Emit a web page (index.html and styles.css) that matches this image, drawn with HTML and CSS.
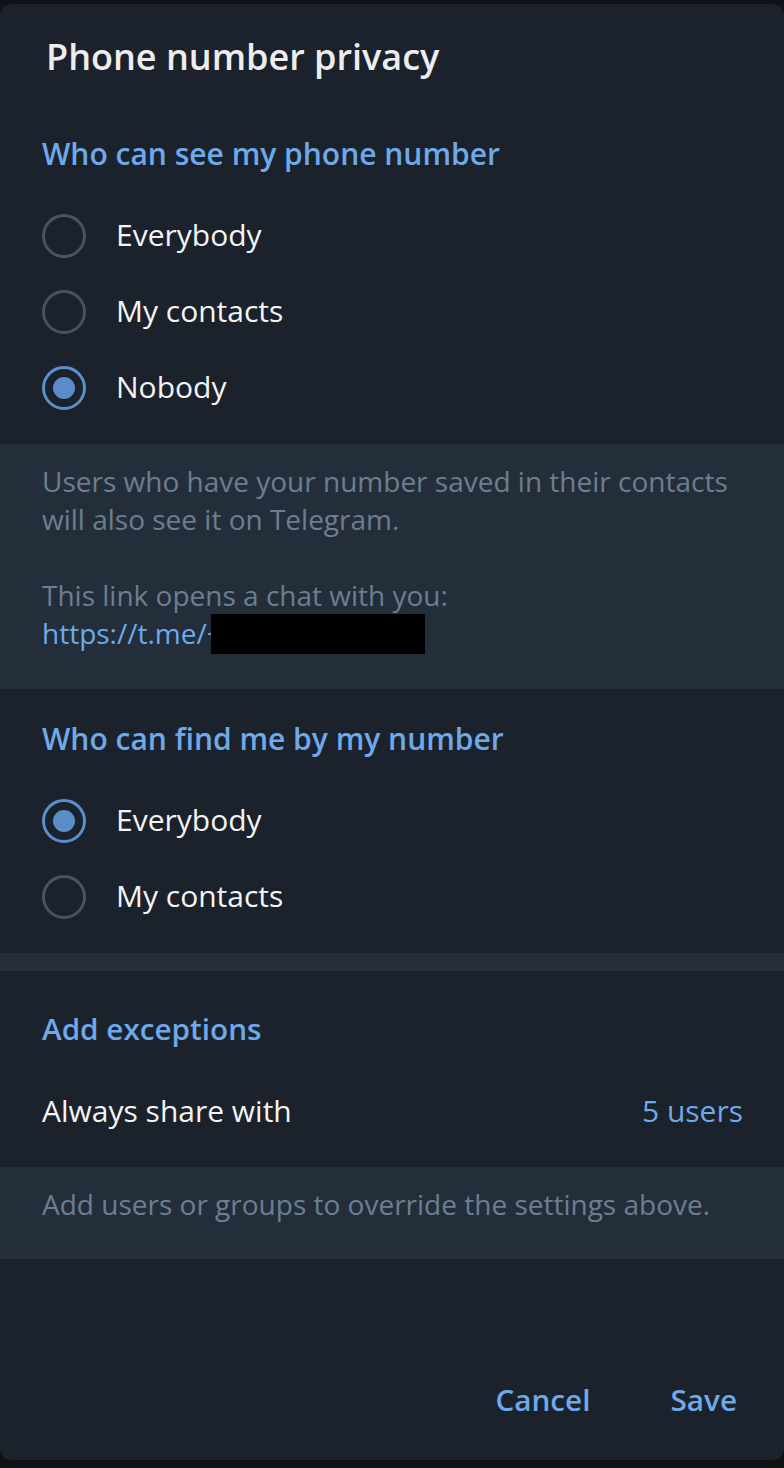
FILE: index.html
```html
<!DOCTYPE html>
<html lang="en">
<head>
<meta charset="utf-8">
<title>Phone number privacy</title>
<link rel="stylesheet" href="styles.css">
</head>
<body>
<div class="dialog">
  <h1 class="title">Phone number privacy</h1>

  <section class="section section-first">
    <h2 class="section-title">Who can see my phone number</h2>
    <div class="options">
      <div class="option"><span class="radio"></span><span class="label">Everybody</span></div>
      <div class="option"><span class="radio"></span><span class="label">My contacts</span></div>
      <div class="option"><span class="radio checked"></span><span class="label">Nobody</span></div>
    </div>
  </section>

  <div class="hint">
    <p class="hint-text">Users who have your number saved in their contacts will also see it on Telegram.</p>
    <p class="hint-text hint-gap">This link opens a chat with you:<br><span class="link">https://t.me/+</span><span class="redact"></span></p>
  </div>

  <section class="section">
    <h2 class="section-title">Who can find me by my number</h2>
    <div class="options">
      <div class="option"><span class="radio checked"></span><span class="label">Everybody</span></div>
      <div class="option"><span class="radio"></span><span class="label">My contacts</span></div>
    </div>
  </section>

  <div class="divider"></div>

  <section class="section section-exceptions">
    <h2 class="section-title exceptions-title">Add exceptions</h2>
    <div class="share-row">
      <span class="share-label">Always share with</span>
      <span class="share-value">5 users</span>
    </div>
  </section>

  <div class="hint">
    <p class="hint-text">Add users or groups to override the settings above.</p>
  </div>

  <div class="footer">
    <span class="button">Cancel</span>
    <span class="button">Save</span>
  </div>
</div>
</body>
</html>
```
FILE: styles.css
```css
html, body {
  margin: 0;
  padding: 0;
  background: #0e1115;
}

body {
  font-family: "Open Sans", "Noto Sans", sans-serif;
  width: 784px;
  height: 1468px;
  overflow: hidden;
}

.dialog {
  margin-top: 4px;
  height: 1456px;
  box-sizing: border-box;
  padding-top: 29px;
  background: #1b222b;
  border-radius: 12px;
  display: flex;
  flex-direction: column;
  overflow: hidden;
}

.title {
  margin: 0 0 23px;
  padding-left: 46px;
  font-size: 36px;
  line-height: 48px;
  font-weight: 600;
  color: #ededed;
}

.section {
  padding: 30px 0 18px;
}

.section-title {
  margin: 0 0 24px;
  padding-left: 42px;
  font-size: 30px;
  line-height: 40px;
  font-weight: 600;
  color: #6ea9e9;
}

.options {
  display: flex;
  flex-direction: column;
}

.option {
  height: 76px;
  display: flex;
  align-items: center;
  padding-left: 42px;
  gap: 30px;
}

.radio {
  width: 44px;
  height: 44px;
  box-sizing: border-box;
  border: 3px solid #455363;
  border-radius: 50%;
  display: flex;
  align-items: center;
  justify-content: center;
  flex: none;
}

.radio.checked {
  border-color: #5a8fcd;
}

.radio.checked::after {
  content: "";
  width: 22px;
  height: 22px;
  border-radius: 50%;
  background: #5a8dc8;
}

.label {
  font-size: 30px;
  line-height: 40px;
  color: #f4f4f4;
  margin-bottom: 3px;
}

.hint {
  background: #242e3a;
  padding: 18px 42px 36px;
}

.hint-text {
  margin: 0;
  font-size: 28px;
  line-height: 38px;
  color: #6c7e90;
}

.hint-gap {
  margin-top: 38px;
}

.link {
  color: #6aabed;
}

.redact {
  display: inline-block;
  width: 214px;
  height: 40px;
  margin-top: -3px;
  margin-bottom: -1px;
  margin-left: -12px;
  vertical-align: -9px;
  background: #000;
}

.divider {
  height: 18px;
  background: #242e3a;
}

.section-exceptions {
  padding: 38px 0 36px;
}

.exceptions-title {
  margin-bottom: 42px;
  font-size: 29.7px;
}

.share-row {
  display: flex;
  justify-content: space-between;
  padding: 0 41px 0 42px;
  font-size: 30px;
  line-height: 40px;
}

.share-label {
  color: #f4f4f4;
}

.share-value {
  color: #6ea9e9;
}

.footer {
  margin-top: auto;
  display: flex;
  justify-content: flex-end;
  gap: 80px;
  padding: 0 47px 40px;
}

.button {
  font-size: 29.7px;
  line-height: 40px;
  font-weight: 600;
  color: #6ea9e9;
}
```
